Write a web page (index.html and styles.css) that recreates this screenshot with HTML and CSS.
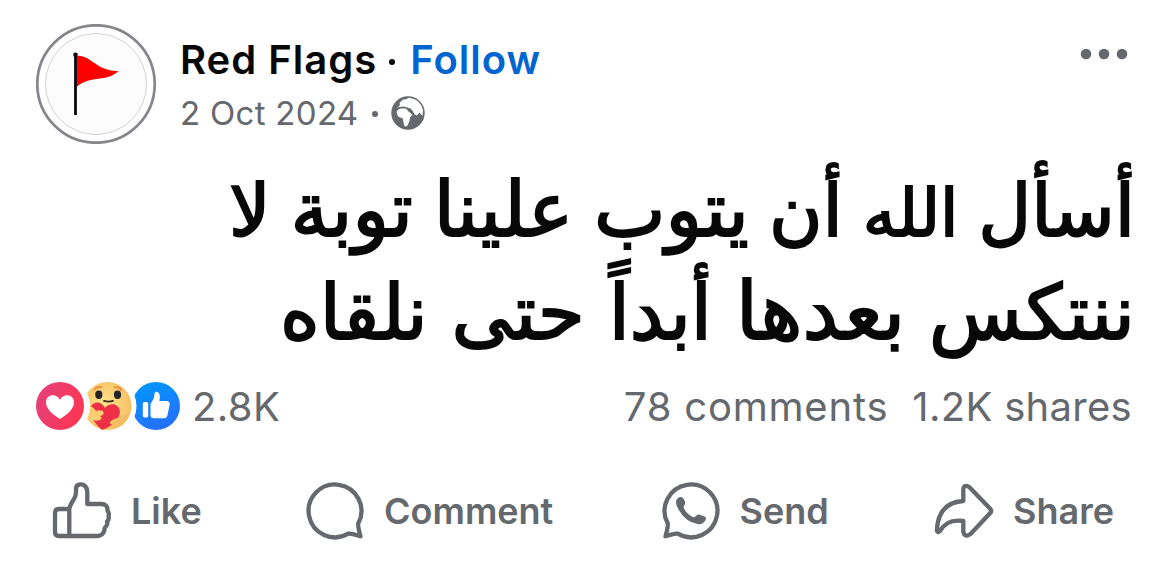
FILE: index.html
```html
<!DOCTYPE html>
<html lang="en">
<head>
  <meta charset="UTF-8" />
  <title>Red Flags</title>
  <link rel="stylesheet" href="styles.css">
</head>
<body>

<div class="post">
  <div class="header">
    <div class="avatar">
      <svg width="120" height="120" viewBox="0 0 120 120">
        <circle cx="60" cy="60" r="58.7" fill="#fff" stroke="#85878c" stroke-width="2.7"/>
        <circle cx="60" cy="60" r="50.5" fill="#fcfcfc" stroke="#d2d3d1" stroke-width="1"/>
        <path d="M40.5 32 C54 30 61 48 82.5 47 C70 59 56 50 40.5 63 Z" fill="#f00"/>
        <path d="M39.5 31 V91" stroke="#0a0a0a" stroke-width="2.8"/>
        <circle cx="39.5" cy="30.8" r="2.3" fill="#0a0a0a"/>
      </svg>
    </div>
    <div class="info">
      <div class="title"><span class="name">Red Flags</span><span class="dot"></span><a class="follow">Follow</a></div>
      <div class="meta"><span class="date">2 Oct 2024</span><span class="dot"></span>
        <svg class="globe" width="34" height="34" viewBox="0 0 34 34">
          <circle cx="17" cy="17" r="16.7" fill="#65686c"/>
          <path d="M5.5 16 Q7 12.5 10 12.5 L15 12.5 L17.5 15.5 L21.5 18.7 L19 21.5 L18.5 25 L16.5 29.5 Q14 31.5 13 29 L11.8 22.5 L7 20.5 Z" fill="#fff"/>
          <path d="M5.5 11.5 Q10 10 8.5 7 L12 3.5 L15 3.2 L18 1.8 Q29.5 3 32 14 L31.5 20 L28.5 16.5 L26 19.5 L23.5 18.5 Q21 12.5 18 12 L13 10.5 L8 11 Z" fill="#fff"/>
        </svg>
      </div>
    </div>
    <svg class="more" width="48" height="12" viewBox="0 0 48 12" fill="#65686c">
      <circle cx="6" cy="6" r="5.3"/>
      <circle cx="24" cy="6" r="5.3"/>
      <circle cx="42" cy="6" r="5.3"/>
    </svg>
  </div>

  <div class="text" dir="rtl" lang="ar">
    <div class="line first">أسأل <span class="narrow">الله</span> أن <span class="wide">يتوب علينا توبة</span> لا</div>
    <div class="line second">ننتكس <span class="wider">بعدها</span> أبداً حتى نلقاه</div>
  </div>

  <div class="stats">
    <svg class="reactions" width="144" height="48" viewBox="0 0 144 48">
      <defs>
        <linearGradient id="love" x1="0" y1="0.3" x2="1" y2="0.7">
          <stop offset="0" stop-color="#e5407a"/>
          <stop offset="1" stop-color="#ff3550"/>
        </linearGradient>
        <radialGradient id="care" cx="0.45" cy="0.45" r="0.6">
          <stop offset="0" stop-color="#ffe48a"/>
          <stop offset="1" stop-color="#f5bd62"/>
        </radialGradient>
        <linearGradient id="like" x1="0.2" y1="0" x2="0.6" y2="1">
          <stop offset="0" stop-color="#0098fb"/>
          <stop offset="1" stop-color="#256fff"/>
        </linearGradient>
      </defs>
      <circle cx="120" cy="24" r="24" fill="url(#like)"/>
      <rect x="106.8" y="20" width="5.4" height="15.5" rx="1.8" fill="#fff"/>
      <path d="M114.5 21.5 Q118 18 118.5 12 Q118.5 9.7 120.5 9.8 Q125 10.5 123.5 19 H131 Q134.2 19.5 133.7 22.5 L131.5 33 Q130.7 36.2 128 36.2 H118 Q114.5 36.2 114.5 33 Z" fill="#fff"/>
      <circle cx="71.5" cy="24" r="29" fill="#fff"/>
      <circle cx="71.5" cy="24" r="24" fill="url(#care)"/>
      <path d="M58.5 7.5 Q61 4 65.5 5.3 M78.5 5.3 Q83 4.5 85.5 8" fill="none" stroke="#e98a3f" stroke-width="1.8" stroke-linecap="round"/>
      <ellipse cx="62.8" cy="12.7" rx="3.6" ry="4.2" fill="#252525"/>
      <ellipse cx="81.5" cy="12.7" rx="3.6" ry="4.2" fill="#252525"/>
      <path d="M68 18.8 Q72.5 20.3 77 18.8" fill="none" stroke="#3d2b1b" stroke-width="1.8" stroke-linecap="round"/>
      <path d="M66 48 C58 40 50 31 55 24 C59 18.5 66 19.5 69 26 C73 20 82 21.5 83.5 27.5 C86 36 75 45 66 48 Z" fill="#ee2f48"/>
      <path d="M50 24 Q56 23 60 29 Q66 27 67.5 30 Q68.5 33 64 34 Q67 36 64 38 Q58 40 51 36 Z" fill="#fbce72"/>
      <path d="M93 34 Q90 30 87 35 Q77 36 74 40 Q73 43 78 42 Q74 46 79 46.5 Q90 43 93 34 Z" fill="#f5bd62"/>
      <circle cx="24" cy="24" r="30" fill="#fff"/>
      <circle cx="24" cy="24" r="24" fill="url(#love)"/>
      <path d="M24 37 C18 33.5 10 27 10 20.5 C10 12 21 11 24 18 C27 11 38 12 38 20.5 C38 27 30 33.5 24 37 Z" fill="#fff"/>
    </svg>
    <span class="count">2.8K</span>
    <span class="comments">78 comments</span>
    <span class="shares">1.2K shares</span>
  </div>

  <div class="actions">
    <div class="action">
      <svg class="icon" width="60" height="60" viewBox="0 0 60 60">
        <path d="M17.3 28 H7 Q3 28 3 32 V51 Q3 55 7 55 H46 Q51 54.5 52.5 49 Q52 47 54.2 45 Q56 43 55 40.5 Q57.5 38 56.5 35.5 Q57.5 32 55.5 30 Q56 23 49 23 H35.3 V11 Q35 3.3 28.3 3.3 Q24 3.3 24 8 Q24.5 14 22 18 Q18 24 17.3 28 V55"/>
      </svg>
      <span>Like</span>
    </div>
    <div class="action comment">
      <svg class="icon" width="60" height="60" viewBox="0 0 60 60">
        <path d="M43.3 52.7 A26.4 26.4 0 1 1 53.3 42.3 Q52.6 45 55.5 55.3 Q46 52 43.3 52.7 Z"/>
      </svg>
      <span>Comment</span>
    </div>
    <div class="action">
      <svg class="icon" width="60" height="60" viewBox="0 0 60 60">
        <path d="M16.7 52.7 A26.4 26.4 0 1 0 6.7 42.3 Q7.4 45 4.5 55.3 Q14 52 16.7 52.7 Z"/>
        <path class="phone" d="M16 18 Q19 14.5 22 17 Q24.5 20 24 23 Q22.5 25 22.7 27 Q25.5 33 32 36.2 Q34 36.5 35.5 34.5 Q37 33 39 33.8 L44 35.8 Q45.5 36.8 44.6 39 Q42 44 36.5 43 Q25 41 18.5 30 Q13 22 16 18 Z"/>
      </svg>
      <span>Send</span>
    </div>
    <div class="action">
      <svg class="icon" width="60" height="60" viewBox="0 0 60 60">
        <path d="M29.3 20 V8.5 Q29.5 3 35 5.8 L56 27.5 Q58.3 30 56 32.3 L36.5 53 Q30.5 57 29.3 50.5 V40 Q13 37.5 6 50 Q3.5 52.5 2.9 49.5 Q4 21.5 29.3 20 Z"/>
      </svg>
      <span>Share</span>
    </div>
  </div>
</div>

</body>
</html>
```
FILE: styles.css
```css
body {
  margin: 0;
  background-color: #fff;
  font-family: Inter, sans-serif;
  color: #080809;
  height: 561px;
  overflow: hidden;
}

.post {
  padding: 24px 37px 0 36px;
}

.header {
  display: flex;
  height: 120px;
}

.avatar {
  width: 120px;
  height: 120px;
  margin-right: 24px;
}

.info {
  flex-grow: 1;
}

.title {
  display: flex;
  align-items: center;
  height: 48px;
  margin-top: 11px;
  font-size: 40px;
  font-weight: 600;
  letter-spacing: 1px;
  white-space: nowrap;
}

.title .dot {
  width: 6px;
  height: 6px;
  margin: 5px 15px 0 12px;
  border-radius: 50%;
  background-color: #080809;
}

.follow {
  color: #0064d1;
}

.meta {
  display: flex;
  align-items: center;
  height: 40px;
  margin-top: 10px;
  font-size: 33px;
  letter-spacing: 0.3px;
  color: #65686c;
  white-space: nowrap;
}

.meta .dot {
  width: 6px;
  height: 6px;
  margin: 2px 13px 0 14px;
  border-radius: 50%;
  background-color: #65686c;
}

.more {
  margin: 24px 4px 0 0;
}

.text {
  height: 204px;
  margin: 16px -3px 0 0;
  font-family: "DejaVu Sans", sans-serif;
  font-size: 73px;
  -webkit-text-stroke: 2px #080809;
}

.line {
  height: 102px;
  line-height: 102px;
  white-space: nowrap;
  text-align-last: justify;
  word-spacing: -8px;
}

.line span {
  line-height: 1;
}

.first {
  width: 906px;
}

.second {
  width: 855px;
  font-size: 76px;
}

.narrow {
  font-size: 66px;
}

.wide {
  font-size: 76px;
}

.wider {
  font-size: 80px;
}

.stats {
  display: flex;
  align-items: center;
  height: 48px;
  margin-top: 18px;
  font-size: 40px;
  color: #65686c;
  white-space: nowrap;
}

.count {
  margin-left: 12px;
  letter-spacing: 0.4px;
}

.comments {
  margin-left: auto;
  margin-right: 24px;
  letter-spacing: 0.8px;
}

.shares {
  letter-spacing: 0.3px;
}

.actions {
  display: flex;
  justify-content: space-between;
  margin-top: 51px;
  padding: 0 18px 0 16px;
}

.action {
  display: flex;
  align-items: center;
  gap: 19px;
  height: 60px;
  font-size: 36px;
  font-weight: 600;
  color: #65686c;
}

.comment {
  margin: 0 2px 0 -2px;
}

.icon {
  fill: none;
  stroke: #65686c;
  stroke-width: 4.3;
  stroke-linejoin: round;
}

.icon .phone {
  fill: #65686c;
  stroke: none;
}
```
